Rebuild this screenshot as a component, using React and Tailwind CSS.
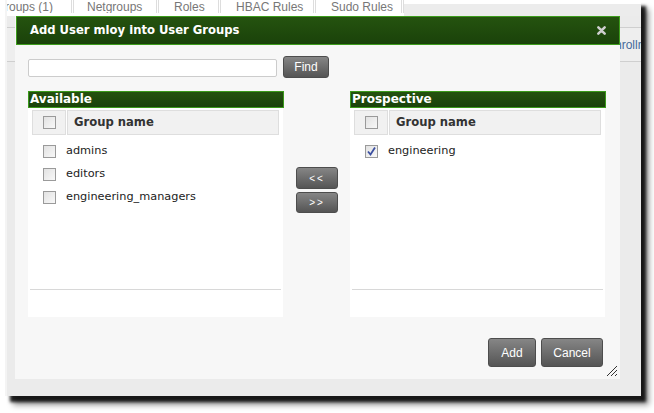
import React from "react";

const Checkbox = ({ checked }) => (
  <div className="w-[13px] h-[13px] border border-[#9a9a9a] bg-gradient-to-br from-[#e2e2e2] to-[#f8f8f8] flex items-center justify-center shrink-0">
    {checked && (
      <svg width="11" height="11" viewBox="0 0 11 11">
        <path d="M2 5.5 L4.5 8.5 L9 1.5" fill="none" stroke="#3b4fa0" strokeWidth="1.8" />
      </svg>
    )}
  </div>
);

const GrayBtn = ({ children, className }) => (
  <div
    className={
      "flex items-center justify-center rounded-[3px] border border-[#4d4d4d] bg-gradient-to-b from-[#868686] to-[#555555] text-white font-['Liberation_Sans',Arial,sans-serif] " +
      className
    }
  >
    {children}
  </div>
);

const ListPanel = ({ title, rows }) => (
  <div className="w-[256px] flex flex-col">
    <div className="h-[17px] bg-gradient-to-b from-[#24520f] to-[#1a420a] border border-[#3a9a1a] text-white font-bold text-[12px] leading-[15px] pl-[1px]">
      {title}
    </div>
    <div className="h-[209px] w-[255px] bg-white flex flex-col pt-[2px]">
      <div className="flex mx-[4px] h-[25px] gap-[1px]">
        <div className="w-[34px] bg-[#f1f1f1] border border-[#dedede] flex items-center justify-center">
          <Checkbox />
        </div>
        <div className="flex-1 bg-[#f1f1f1] border border-[#dedede] flex items-center pl-[6px] font-bold text-[11.6px] text-[#333]">
          Group name
        </div>
      </div>
      <div className="flex flex-col pt-[5px] h-[154px]">
        {rows.map((r) => (
          <div key={r.name} className="flex items-center h-[23px] pl-[15px]">
            <Checkbox checked={r.checked} />
            <span className="ml-[10px] text-[11.3px] text-[#222]">{r.name}</span>
          </div>
        ))}
      </div>
      <div className="mx-[2px] h-[1px] bg-[#d8d8d8]" />
    </div>
  </div>
);

const Sep = () => <span className="w-[3px] h-[13px] border-x border-[#ddd] shrink-0" />;

export default function App() {
  return (
    <div className="w-[654px] h-[413px] bg-white overflow-hidden font-['DejaVu_Sans',Verdana,sans-serif]">
      <div className="ml-[5px] w-[636px] h-[396px] relative bg-[#e6e6e6] shadow-[5px_6px_3px_rgba(0,0,0,0.85),8px_9px_6px_rgba(0,0,0,0.4)] border-l-[2px] border-l-[#f4f4f4]">
        <div className="overflow-hidden w-full h-full flex flex-col">
          {/* underlying tabs */}
          <div className="h-[16px] bg-white flex items-start shrink-0">
            <div className="h-[13px] flex items-start overflow-hidden text-[12px] text-[#777] font-['Liberation_Sans',Arial,sans-serif] leading-none">
              <span className="w-[66px] -ml-[2px] mt-[1px]">roups (1)</span>
              <Sep />
              <span className="w-[82px] pl-[13px] mt-[1px]">Netgroups</span>
              <Sep />
              <span className="w-[59px] pl-[15px] mt-[1px]">Roles</span>
              <Sep />
              <span className="w-[92px] pl-[15px] mt-[1px]">HBAC Rules</span>
              <Sep />
              <span className="w-[85px] pl-[15px] mt-[1px]">Sudo Rules</span>
              <Sep />
            </div>
            <div className="flex-1 h-[12px] mt-[4px] bg-[#ececec]" />
          </div>
          <div className="flex-1 bg-[#ebebeb] flex flex-col">
            <div className="h-[11px]" />
            <div className="h-[35px] border-y border-[#cfcfcf] bg-[#eeeeee] flex items-center">
              <span className="ml-[600px] text-[12px] text-[#456a9a] font-['Liberation_Sans',Arial,sans-serif] whitespace-nowrap">
                Enrollment
              </span>
            </div>
          </div>
        </div>

        {/* modal dialog */}
        <div className="absolute left-[8px] top-[16px] w-[605px] h-[363px] bg-[#f7f7f7] flex flex-col">
          <div className="h-[29px] ml-[1px] bg-gradient-to-b from-[#25530f] to-[#1a420a] border border-[#3d9d1c] flex items-center justify-between pl-[13px] pr-[13px]">
            <span className="text-white font-bold text-[11.6px]">Add User mloy into User Groups</span>
            <svg width="9" height="9" viewBox="0 0 10 10">
              <path d="M1.5 1.5 L8.5 8.5 M8.5 1.5 L1.5 8.5" stroke="#cfcfcf" strokeWidth="2.8" strokeLinecap="round" />
            </svg>
          </div>
          <div className="flex-1 flex flex-col pl-[13px] relative">
            <div className="flex items-start mt-[11px]">
              <div className="mt-[3px] w-[249px] h-[18px] bg-white border border-[#cccccc] rounded-[2px]" />
              <GrayBtn className="ml-[6px] w-[46px] h-[22px] text-[12px]">Find</GrayBtn>
            </div>
            <div className="flex mt-[13px]">
              <ListPanel
                title="Available"
                rows={[{ name: "admins" }, { name: "editors" }, { name: "engineering_managers" }]}
              />
              <div className="w-[66px] flex flex-col items-center pt-[76px] gap-[3px]">
                <GrayBtn className="w-[42px] h-[22px] text-[10px] tracking-[2px] text-[#eee]">&lt;&lt;</GrayBtn>
                <GrayBtn className="w-[42px] h-[21px] text-[10px] tracking-[2px] text-[#eee]">&gt;&gt;</GrayBtn>
              </div>
              <ListPanel title="Prospective" rows={[{ name: "engineering", checked: true }]} />
            </div>
            <div className="flex justify-end gap-[5px] mt-[21px] mr-[17px]">
              <GrayBtn className="w-[48px] h-[29px] text-[12px]">Add</GrayBtn>
              <GrayBtn className="w-[62px] h-[29px] text-[12px]">Cancel</GrayBtn>
            </div>
            <svg className="absolute right-[2px] bottom-[2px]" width="12" height="12" viewBox="0 0 12 12">
              <path d="M11 1 L1 11 M11 5 L5 11 M11 9 L9 11" stroke="#333" strokeWidth="1" />
            </svg>
          </div>
        </div>
      </div>
    </div>
  );
}
